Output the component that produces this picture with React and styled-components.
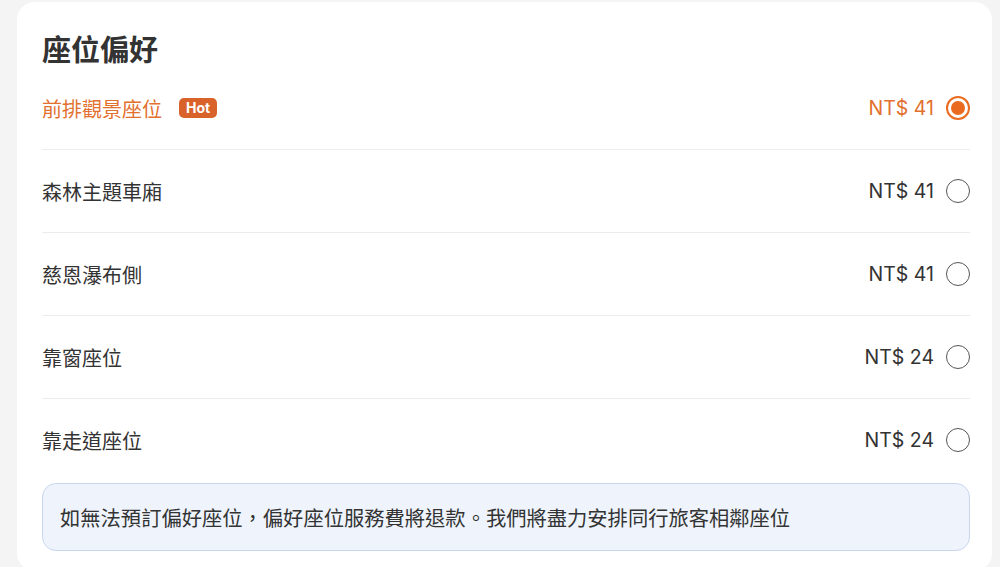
import styled, { createGlobalStyle } from "styled-components";

const GlobalStyle = createGlobalStyle`
  html, body {
    margin: 0;
    padding: 0;
    background: #f4f4f5;
  }
  body {
    font-family: "Noto Sans CJK TC", "Noto Sans", sans-serif;
    color: #333;
  }
`;

const Page = styled.div`
  padding: 2px 8px 0 17px;
`;

const Card = styled.section`
  background: #fff;
  border-radius: 18px;
  padding: 28px 22px 20px 25px;
`;

const Title = styled.h2`
  margin: 0;
  font-size: 29px;
  line-height: 37px;
  font-weight: 700;
  color: #333;
`;

const List = styled.div`
  display: flex;
  flex-direction: column;
`;

const Row = styled.label`
  display: flex;
  align-items: center;
  height: 82px;
  border-bottom: ${(p) => (p.last ? "none" : "1px solid #ececec")};
  color: ${(p) => (p.active ? "#e2702f" : "#333")};
  cursor: pointer;
`;

const Name = styled.span`
  flex: 1;
  display: flex;
  align-items: center;
  gap: 17px;
  font-size: 20px;
`;

const Badge = styled.span`
  background: #d9622a;
  color: #fff;
  font-family: "Inter", "Liberation Sans", sans-serif;
  font-weight: 700;
  font-size: 14px;
  line-height: 20px;
  padding: 0 7px;
  border-radius: 5px;
`;

const Price = styled.span`
  font-family: "Inter", "Liberation Sans", sans-serif;
  font-size: 19.5px;
  margin-right: 12px;
`;

const Radio = styled.span`
  width: 24px;
  height: 24px;
  box-sizing: border-box;
  border-radius: 50%;
  border: ${(p) => (p.checked ? "2px solid #ea6a1f" : "1.5px solid #555")};
  display: flex;
  align-items: center;
  justify-content: center;
  &::after {
    content: "";
    display: ${(p) => (p.checked ? "block" : "none")};
    width: 14px;
    height: 14px;
    border-radius: 50%;
    background: #ea6a1f;
  }
`;

const Notice = styled.div`
  margin-top: 2px;
  background: #eef3fc;
  border: 1px solid #c9d7ee;
  border-radius: 14px;
  padding: 19px 17px;
  font-size: 20.3px;
  line-height: 28px;
  color: #333;
`;

const seats = [
  { name: "前排觀景座位", price: 41, hot: true },
  { name: "森林主題車廂", price: 41 },
  { name: "慈恩瀑布側", price: 41 },
  { name: "靠窗座位", price: 24 },
  { name: "靠走道座位", price: 24 },
];

export default function App() {
  const selected = 0;
  return (
    <Page>
      <GlobalStyle />
      <Card>
        <Title>座位偏好</Title>
        <List>
          {seats.map((s, i) => (
            <Row key={s.name} active={i === selected} last={i === seats.length - 1}>
              <Name>
                {s.name}
                {s.hot && <Badge>Hot</Badge>}
              </Name>
              <Price>NT$ {s.price}</Price>
              <Radio checked={i === selected} />
            </Row>
          ))}
        </List>
        <Notice>如無法預訂偏好座位，偏好座位服務費將退款。我們將盡力安排同行旅客相鄰座位</Notice>
      </Card>
    </Page>
  );
}
